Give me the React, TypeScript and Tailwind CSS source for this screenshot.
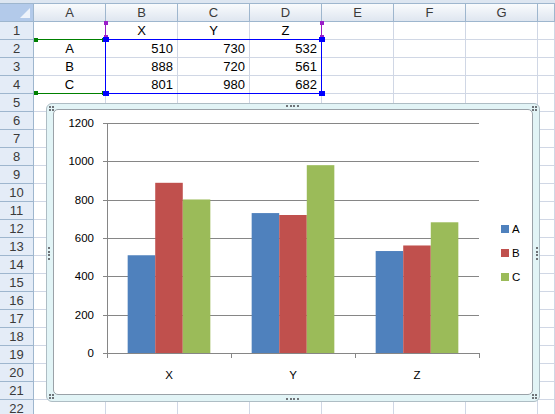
import type React from 'react'

const columns = ['A', 'B', 'C', 'D', 'E', 'F', 'G', '']

const cells: Record<number, (string | number)[]> = {
  1: ['', 'X', 'Y', 'Z'],
  2: ['A', 510, 730, 532],
  3: ['B', 888, 720, 561],
  4: ['C', 801, 980, 682],
}

const series = [
  { name: 'A', color: '#4f81bd', values: [510, 730, 532] },
  { name: 'B', color: '#c0504d', values: [888, 720, 561] },
  { name: 'C', color: '#9bbb59', values: [801, 980, 682] },
]
const categories = ['X', 'Y', 'Z']

// plot geometry, relative to the chart's white area
const axisX = 53
const plotRight = 425
const yZero = 243
const yTop = 13
const catWidth = (plotRight - axisX) / 3
const barWidth = catWidth / 4.5
const barOffset = (catWidth * 0.75) / 4.5
const toY = (v: number) => yZero - ((yZero - yTop) * v) / 1200

const Chart: React.FC = () => (
  <svg width={478} height={284} className="block" fontFamily="'Liberation Sans', Arial, sans-serif">
    {[0, 200, 400, 600, 800, 1000, 1200].map((v) => (
      <g key={v}>
        <line x1={axisX - 4} x2={plotRight} y1={Math.round(toY(v)) + 0.5} y2={Math.round(toY(v)) + 0.5} stroke="#868686" />
        <text x={40} y={Math.round(toY(v)) + 4} fontSize={11.5} textAnchor="end" fill="#000">
          {v}
        </text>
      </g>
    ))}
    {series.map((s, si) =>
      s.values.map((v, ci) => {
        const x = axisX + ci * catWidth + barOffset + si * barWidth
        return <rect key={s.name + ci} x={x} y={toY(v)} width={barWidth} height={yZero - toY(v)} fill={s.color} />
      }),
    )}
    <line x1={axisX + 0.5} x2={axisX + 0.5} y1={yTop} y2={yZero + 1} stroke="#868686" />
    <line x1={axisX} x2={plotRight + 1} y1={yZero + 0.5} y2={yZero + 0.5} stroke="#868686" />
    {[0, 1, 2, 3].map((i) => (
      <line
        key={i}
        x1={Math.round(axisX + i * catWidth) + 0.5}
        x2={Math.round(axisX + i * catWidth) + 0.5}
        y1={yZero}
        y2={yZero + 5}
        stroke="#868686"
      />
    ))}
    {categories.map((c, i) => (
      <text key={c} x={axisX + i * catWidth + catWidth / 2} y={269} fontSize={11.5} textAnchor="middle" fill="#000">
        {c}
      </text>
    ))}
    {series.map((s, i) => (
      <g key={s.name}>
        <rect x={447} y={115 + i * 24} width={8} height={8} fill={s.color} />
        <text x={458} y={123 + i * 24} fontSize={11.5} fill="#000">
          {s.name}
        </text>
      </g>
    ))}
  </svg>
)

const Dots: React.FC<{ vertical?: boolean; className: string }> = ({ vertical, className }) => (
  <div className={`absolute flex gap-[1.5px] ${vertical ? 'flex-col' : 'flex-row'} ${className}`}>
    {[0, 1, 2, 3].map((i) => (
      <span key={i} className="block h-[2px] w-[2px] bg-[#6f7378]" />
    ))}
  </div>
)

const CornerDots: React.FC<{ className: string }> = ({ className }) => (
  <div className={`absolute grid grid-cols-2 gap-[1px] ${className}`}>
    {[0, 1, 2, 3].map((i) => (
      <span key={i} className="h-[2px] w-[2px] bg-[#6f7378]" />
    ))}
  </div>
)

// corner handle squares of a range outline
const Handles: React.FC<{ color: string; size: string; corners: string[] }> = ({ color, size, corners }) => (
  <>
    {corners.map((c) => (
      <span key={c} className={`absolute ${size} ${color} ${c}`} />
    ))}
  </>
)

const App: React.FC = () => {
  const rows = Array.from({ length: 22 }, (_, i) => i + 1)

  return (
    <div className="relative h-[414px] w-[555px] overflow-hidden bg-white font-['Liberation_Sans',Arial,sans-serif] text-[13px] text-black">
      <div className="h-[4px] border-b border-[#9eb6ce] bg-[#dde6f1]" />

      <div className="grid grid-cols-[34px_repeat(7,72px)_1fr]">
        <div className="relative h-[18px] border-r border-b border-[#9eb6ce] bg-[#b3caea]">
          <svg className="absolute right-[3px] bottom-[3px]" width="10" height="10">
            <polygon points="10,0 10,10 0,10" fill="#eef3fb" />
          </svg>
        </div>
        {columns.map((c, i) => (
          <div
            key={i}
            className="flex h-[18px] items-center justify-center border-r border-b border-[#9eb6ce] bg-linear-to-b from-[#f9fbfd] to-[#dfe6f0] text-[#3a3a3a]"
          >
            {c}
          </div>
        ))}

        {rows.map((r) => (
          <div key={r} className="contents">
            <div className="flex h-[18px] items-center justify-center border-r border-b border-[#9eb6ce] bg-[#e4ecf7] text-[#3a3a3a]">
              {r}
            </div>
            {columns.map((_, ci) => {
              const v = cells[r]?.[ci]
              const isNum = typeof v === 'number'
              return (
                <div
                  key={ci}
                  className={`flex h-[18px] items-center border-r border-b border-[#d0d7e5] ${
                    isNum ? 'justify-end pr-[4px]' : 'justify-center'
                  }`}
                >
                  {v ?? ''}
                </div>
              )
            })}
          </div>
        ))}
      </div>

      {/* series name range B1:D1 */}
      <div className="absolute top-[22px] left-[105px] h-[18px] w-[217px] border-x border-[#9a1ec8]">
        <Handles
          color="bg-[#9a1ec8]"
          size="h-[4px] w-[4px]"
          corners={['-top-[1px] -left-[2.5px]', '-top-[1px] -right-[2.5px]', 'top-[13px] -left-[2.5px]', 'top-[13px] -right-[2.5px]']}
        />
      </div>
      {/* category range A2:A4 */}
      <div className="absolute top-[39px] left-[34px] h-[55px] w-[72px] border-y border-[#008000]">
        <Handles
          color="bg-[#008000]"
          size="h-[4px] w-[4px]"
          corners={['-top-[2px] left-0', '-bottom-[2px] left-0', '-top-[2px] right-[0px]', '-bottom-[2px] right-[0px]']}
        />
      </div>
      {/* values range B2:D4 */}
      <div className="absolute top-[39px] left-[105px] h-[55px] w-[217px] border border-[#0000ff]">
        <Handles
          color="bg-[#0000ff]"
          size="h-[5px] w-[6px]"
          corners={['-top-[3px] -left-[3.5px]', '-top-[3px] -right-[3.5px]', '-bottom-[3px] -left-[3.5px]', '-bottom-[3px] -right-[3.5px]']}
        />
      </div>

      {/* chart object */}
      <div className="absolute top-[103px] left-[46px] h-[299px] w-[494px] rounded-[6px] border border-[#aebdc4] bg-[#e2f4f6] px-[6px] pt-[5px] pb-[6px]">
        <div className="h-full w-full overflow-hidden rounded-[5px] border border-[#9aa2a8] bg-white">
          <Chart />
        </div>
        <CornerDots className="top-[2px] left-[2px]" />
        <CornerDots className="top-[2px] right-[2px]" />
        <CornerDots className="bottom-[2px] left-[2px]" />
        <CornerDots className="right-[2px] bottom-[2px]" />
        <Dots className="top-[1px] left-[239px]" />
        <Dots className="bottom-[1px] left-[239px]" />
        <Dots vertical className="top-[143px] left-[1px]" />
        <Dots vertical className="top-[143px] right-[1px]" />
      </div>
    </div>
  )
}

export default App
